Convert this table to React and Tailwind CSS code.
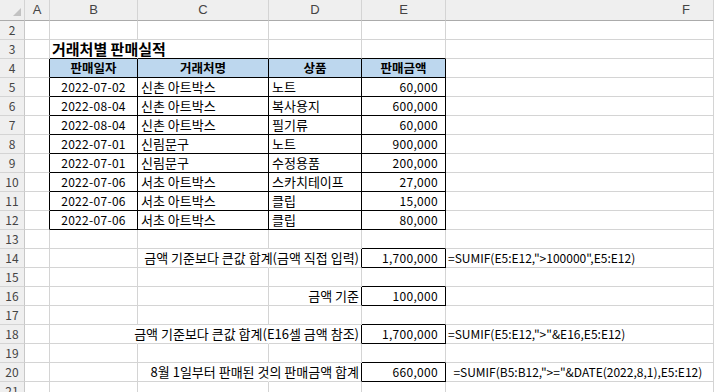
import React from "react";

const COLS = ["A", "B", "C", "D", "E", "F"];

const tableRows = [
  ["2022-07-02", "신촌 아트박스", "노트", "60,000"],
  ["2022-08-04", "신촌 아트박스", "복사용지", "600,000"],
  ["2022-08-04", "신촌 아트박스", "필기류", "60,000"],
  ["2022-07-01", "신림문구", "노트", "900,000"],
  ["2022-07-01", "신림문구", "수정용품", "200,000"],
  ["2022-07-06", "서초 아트박스", "스카치테이프", "27,000"],
  ["2022-07-06", "서초 아트박스", "클립", "15,000"],
  ["2022-07-06", "서초 아트박스", "클립", "80,000"],
];

const summary = {
  14: ["금액 기준보다 큰값 합계(금액 직접 입력)", "1,700,000", '=SUMIF(E5:E12,">100000",E5:E12)'],
  16: ["금액 기준", "100,000", ""],
  18: ["금액 기준보다 큰값 합계(E16셀 금액 참조)", "1,700,000", '=SUMIF(E5:E12,">"&E16,E5:E12)'],
  20: ["8월 1일부터 판매된 것의 판매금액 합계", "660,000", '  =SUMIF(B5:B12,">="&DATE(2022,8,1),E5:E12)'],
};

// c: 0=A .. 5=F
function isBoxed(r, c) {
  if (r >= 4 && r <= 12 && c >= 1 && c <= 4) return true;
  if (c === 4 && (r === 14 || r === 16 || r === 18 || r === 20)) return true;
  return false;
}

const hiddenRight = {
  3: [1],
  14: [2],
  18: [1, 2],
  20: [2],
};

function Cell({ r, c }) {
  const boxedR = isBoxed(r, c) || isBoxed(r, c + 1);
  const boxedB = isBoxed(r, c) || isBoxed(r + 1, c);
  const hideR = (hiddenRight[r] || []).includes(c);
  const rCls = boxedR ? "border-r-black" : hideR ? "border-r-white" : "border-r-[#d4d4d4]";
  const bCls = boxedB ? "border-b-black" : "border-b-[#d4d4d4]";

  let content = null;
  let align = "justify-start pl-[3px]";
  let extra = "";

  if (r === 3 && c === 1) {
    content = <span className="font-bold text-[15px]">거래처별 판매실적</span>;
    align = "justify-start pl-[2px]";
  } else if (r === 4 && c >= 1 && c <= 4) {
    content = (
      <span className="font-bold text-[12.5px]">{["판매일자", "거래처명", "상품", "판매금액"][c - 1]}</span>
    );
    align = "justify-center";
    extra = "bg-[#bdd7ee]";
  } else if (r >= 5 && r <= 12 && c >= 1 && c <= 4) {
    const v = tableRows[r - 5][c - 1];
    if (c === 1) {
      content = <span className="tracking-[0.3px]">{v}</span>;
      align = "justify-center";
    } else if (c === 4) {
      content = <span className="tracking-[0.3px]">{v}</span>;
      align = "justify-end pr-[7px]";
    } else {
      content = <span className="text-[13px]">{v}</span>;
      align = "justify-start pl-[3px]";
    }
  } else if (summary[r]) {
    const s = summary[r];
    if (c === 3) {
      content = <span className="text-[13px]">{s[0]}</span>;
      align = "justify-end pr-[2px]";
    } else if (c === 4) {
      content = <span className="tracking-[0.3px]">{s[1]}</span>;
      align = "justify-end pr-[7px]";
    } else if (c === 5 && s[2]) {
      content = <span className="whitespace-pre">{s[2]}</span>;
      align = "justify-start pl-[2px]";
    }
  }

  return (
    <div className={`flex items-center whitespace-nowrap border-r border-b ${rCls} ${bCls} ${align} ${extra}`}>
      {content}
    </div>
  );
}

export default function App() {
  const rows = [];
  for (let r = 2; r <= 21; r++) rows.push(r);
  return (
    <div className="w-[714px] h-[392px] overflow-hidden bg-white text-[12px] text-black font-['Noto_Sans_CJK_KR','Noto_Sans',sans-serif]">
      <div className="grid grid-cols-[25px_25px_88px_131px_93px_84px_268px] grid-rows-[21px_repeat(20,19px)]">
        {/* corner */}
        <div className="relative bg-[#efefef] border-r border-b border-r-[#d4d4d4] border-b-[#ababab]">
          <svg className="absolute left-[13px] top-[8px]" width="9" height="9" viewBox="0 0 9 9">
            <polygon points="0,8 8,8 8,0" fill="#c2c2c2" />
          </svg>
        </div>
        {COLS.map((l, i) => (
          <div
            key={l}
            className={`flex items-center bg-[#efefef] border-r border-b border-r-[#d4d4d4] border-b-[#ababab] text-[#444] text-[13px] font-['Liberation_Sans',sans-serif] ${
              i === 5 ? "justify-end pr-[23px]" : "justify-center"
            }`}
          >
            {l}
          </div>
        ))}
        {rows.map((r) => (
          <React.Fragment key={r}>
            <div className="flex items-center justify-center bg-[#efefef] border-r border-b border-r-[#c8c8c8] border-b-[#d4d4d4] text-[#444] text-[12px]">
              {r}
            </div>
            {COLS.map((_, c) => (
              <Cell key={c} r={r} c={c} />
            ))}
          </React.Fragment>
        ))}
      </div>
    </div>
  );
}
